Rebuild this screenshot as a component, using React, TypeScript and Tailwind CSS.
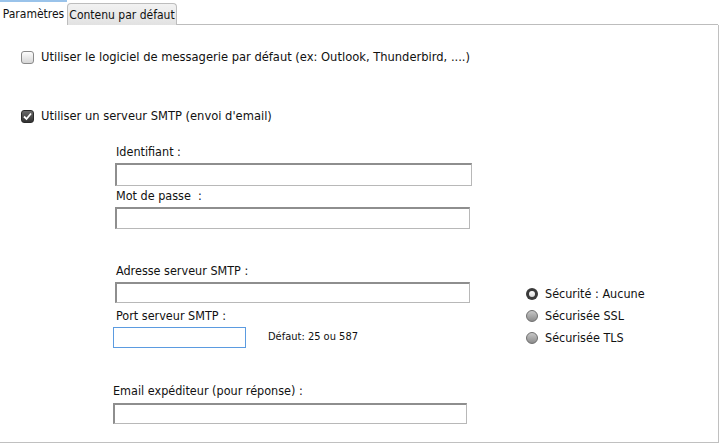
import React from "react";

const font = { fontFamily: '"DejaVu Sans Condensed", "DejaVu Sans", sans-serif' };

function Checkbox({ checked }: { checked?: boolean }) {
  if (checked) {
    return (
      <span className="inline-flex w-[13px] h-[13px] rounded-[3px] bg-gradient-to-b from-[#6a6a6a] to-[#333] border border-[#2a2a2a] items-center justify-center shrink-0">
        <svg width="11" height="11" viewBox="0 0 11 11">
          <path d="M2 5.5 L4.5 8 L9 2.5" stroke="#fff" strokeWidth="1.8" fill="none" />
        </svg>
      </span>
    );
  }
  return (
    <span className="inline-block w-[13px] h-[13px] rounded-[3px] bg-gradient-to-b from-[#fdfdfd] to-[#d6d6d6] border border-[#8a8a8a] shrink-0" />
  );
}

function Radio({ checked }: { checked?: boolean }) {
  if (checked) {
    return (
      <span className="inline-flex w-[12px] h-[12px] rounded-full bg-[#3a3a3a] items-center justify-center shrink-0">
        <span className="w-[6px] h-[6px] rounded-full bg-gradient-to-b from-white to-[#d8d8d8]" />
      </span>
    );
  }
  return (
    <span className="inline-block w-[12px] h-[12px] rounded-full bg-gradient-to-b from-[#c8c8c8] to-[#8c8c8c] border border-[#6e6e6e] shrink-0" />
  );
}

function Input({ w }: { w: string }) {
  return (
    <div
      className={
        "bg-white border border-t-[#8e8e8e] border-l-[#8e8e8e] border-r-[#b8b8b8] border-b-[#b8b8b8] border-t-2 border-l-2 " +
        w
      }
    />
  );
}

export default function App() {
  return (
    <div className="w-[721px] h-[444px] bg-white text-[#111] text-[12.5px]" style={font}>
      <div className="flex h-[25px] items-end">
        <div className="h-[25px] w-[67px] border-t-2 border-[#9ac3ea] bg-white flex items-center justify-center text-[12px] whitespace-nowrap">
          Paramètres
        </div>
        <div className="h-[22px] w-[110px] rounded-t-[4px] border border-[#bdbdbd] border-b-0 bg-gradient-to-b from-[#f2f2f2] to-[#e2e2e2] flex items-center justify-center text-[12px] whitespace-nowrap">
          Contenu par défaut
        </div>
        <div className="flex-1 h-full border-b border-[#bdbdbd] w-0" />
        <div className="w-[3px]" />
      </div>
      <div className="w-[719px] h-[418px] border-r border-b border-[#c0c0c0] flex flex-col">
        <div className="flex items-center gap-[7px] pl-[21px] mt-[25px] h-[14px]">
          <Checkbox />
          <span className="text-[12.8px] whitespace-nowrap">Utiliser le logiciel de messagerie par défaut (ex: Outlook, Thunderbird, ....)</span>
        </div>
        <div className="flex items-center gap-[7px] pl-[21px] mt-[45px] h-[14px]">
          <Checkbox checked />
          <span className="text-[12.8px] whitespace-nowrap">Utiliser un serveur SMTP (envoi d'email)</span>
        </div>
        <div className="pl-[115px] mt-[21px] flex flex-col">
          <span className="pl-[1px] h-[16px] leading-[16px]">Identifiant :</span>
          <div className="mt-[3px]"><Input w="w-[357px] h-[23px]" /></div>
          <span className="pl-[1px] mt-[2px] h-[16px] leading-[16px]">Mot de passe&nbsp; :</span>
          <div className="mt-[3px]"><Input w="w-[355px] h-[22px]" /></div>
        </div>
        <div className="flex mt-[34px]">
          <div className="flex flex-col">
            <div className="pl-[115px] flex flex-col">
              <span className="pl-[1px] h-[16px] leading-[16px]">Adresse serveur SMTP :</span>
              <div className="mt-[3px]"><Input w="w-[355px] h-[21px]" /></div>
              <span className="pl-[1px] mt-[5px] h-[16px] leading-[16px]">Port serveur SMTP :</span>
            </div>
            <div className="pl-[113px] mt-[3px] flex items-center">
              <div className="w-[133px] h-[21px] bg-white border border-[#5b9be0]" />
              <span className="ml-[22px] text-[11px]">Défaut: 25 ou 587</span>
            </div>
            <div className="pl-[113px] mt-[35px] flex flex-col">
              <span className="h-[16px] leading-[16px]">Email expéditeur (pour réponse) :</span>
              <div className="mt-[4px]"><Input w="w-[354px] h-[21px]" /></div>
            </div>
          </div>
          <div className="ml-[56px] mt-[25px] flex flex-col gap-[10px]">
            <div className="flex items-center gap-[7px] h-[12px]"><Radio checked /><span>Sécurité : Aucune</span></div>
            <div className="flex items-center gap-[7px] h-[12px]"><Radio /><span>Sécurisée SSL</span></div>
            <div className="flex items-center gap-[7px] h-[12px]"><Radio /><span>Sécurisée TLS</span></div>
          </div>
        </div>
      </div>
    </div>
  );
}
